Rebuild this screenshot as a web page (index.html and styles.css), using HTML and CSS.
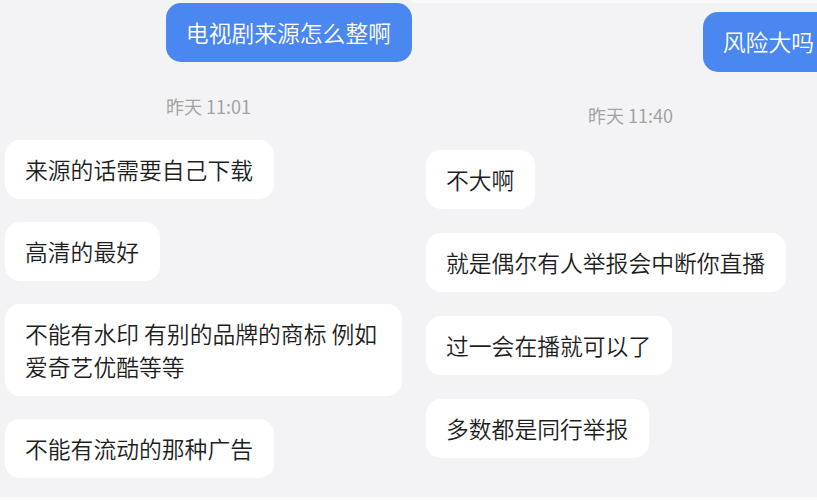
FILE: index.html
```html
<!DOCTYPE html>
<html lang="zh-CN">
<head>
    <meta charset="UTF-8">
    <meta name="viewport" content="width=device-width, initial-scale=1.0">
    <title>聊天记录</title>
    <link rel="stylesheet" href="styles.css">
</head>
<body>
    <div class="screens">
        <!-- First screenshot -->
        <div class="panel panel-left">
            <div class="chat">
                <div class="msg msg-out">电视剧来源怎么整啊</div>
                <div class="time">昨天 11:01</div>
                <div class="msg msg-in">来源的话需要自己下载</div>
                <div class="msg msg-in">高清的最好</div>
                <div class="msg msg-in msg-wrap">不能有水印 有别的品牌的商标 例如<br>爱奇艺优酷等等</div>
                <div class="msg msg-in">不能有流动的那种广告</div>
            </div>
        </div>

        <!-- Second screenshot -->
        <div class="panel panel-right">
            <div class="chat">
                <div class="msg msg-out">风险大吗</div>
                <div class="time">昨天 11:40</div>
                <div class="msg msg-in">不大啊</div>
                <div class="msg msg-in">就是偶尔有人举报会中断你直播</div>
                <div class="msg msg-in">过一会在播就可以了</div>
                <div class="msg msg-in">多数都是同行举报</div>
            </div>
        </div>
    </div>
</body>
</html>
```

FILE: styles.css
```css
body {
    margin: 0;
    background-color: #fbfbfb;
    font-family: "Noto Sans CJK SC", "Noto Sans", sans-serif;
}
.screens {
    display: flex;
    width: 817px;
    height: 497px;
    overflow: hidden;
}
.panel {
    background-color: #f3f3f5;
    overflow: hidden;
    flex: none;
}
.panel-left {
    width: 412px;
}
.panel-right {
    width: 405px;
    border-top: 3px solid #fbfbfb;
    box-sizing: border-box;
}
.chat {
    display: flex;
    flex-direction: column;
    align-items: flex-start;
}
.panel-left .chat {
    width: 412px;
    padding: 3px 0 0 5px;
    box-sizing: border-box;
    gap: 23px;
}
.panel-right .chat {
    width: 436px;
    padding: 9px 13px 0 14px;
    box-sizing: border-box;
    gap: 24px;
}
.msg {
    font-size: 22.8px;
    font-weight: 350;
    line-height: 33px;
    padding: 13px 21px 13px 20px;
    border-radius: 15px;
    color: #1e1e1e;
    background-color: #ffffff;
    white-space: nowrap;
}
.msg-wrap {
    padding-right: 25px;
}
.msg-out {
    align-self: flex-end;
    background-color: #4a87f0;
    color: #ffffff;
}
.panel-right .msg-out {
    padding-bottom: 14px;
}
.time {
    align-self: center;
    font-size: 18px;
    line-height: 24px;
    color: #a2a2a4;
    margin: 9px 0 -1px;
}
.panel-right .time {
    margin-top: 7px;
}
```
